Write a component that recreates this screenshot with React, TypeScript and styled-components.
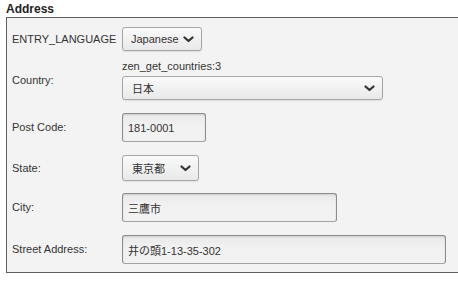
import React from 'react';
import styled, { createGlobalStyle } from 'styled-components';

const GlobalStyle = createGlobalStyle`
  html, body {
    margin: 0;
    padding: 0;
    background: #ffffff;
    overflow: hidden;
  }
  body {
    font-family: "Liberation Sans", Arial, "Noto Sans CJK JP", sans-serif;
    color: #333;
  }
`;

const Wrapper = styled.div`
  padding: 2px 0 0 6px;
  width: 470px;
`;

const Heading = styled.h3`
  margin: 0 0 1px;
  font-size: 12px;
  line-height: 14px;
  font-weight: bold;
  color: #222;
`;

const Panel = styled.div`
  border: 1px solid #5f5f5f;
  background: #f3f3f3;
  padding: 9px 0 8px 5px;
  display: flex;
  flex-direction: column;
`;

const Row = styled.div<{ $gap?: number }>`
  display: flex;
  align-items: center;
  margin-top: ${(p) => (p.$gap ?? 13)}px;
  &:first-child {
    margin-top: 0;
  }
`;

const Label = styled.div`
  width: 110px;
  flex-shrink: 0;
  font-size: 11px;
  line-height: 13px;
  color: #333;
`;

const Field = styled.div`
  display: flex;
  flex-direction: column;
`;

const Note = styled.div`
  font-size: 11px;
  line-height: 13px;
  color: #333;
  margin-bottom: 3px;
`;

const SelectBox = styled.div<{ $w: number; $h?: number; $pad?: number }>`
  box-sizing: border-box;
  width: ${(p) => p.$w}px;
  height: ${(p) => p.$h ?? 24}px;
  display: flex;
  align-items: center;
  justify-content: space-between;
  padding: 0 7px 0 ${(p) => p.$pad ?? 8}px;
  border: 1px solid #a6a6a6;
  border-radius: 3px;
  background: linear-gradient(#fafafa, #e9e9e9);
  box-shadow: 0 1px 1px rgba(0, 0, 0, 0.08);
  font-size: 11px;
  color: #333;
`;

const TextInput = styled.div<{ $w: number }>`
  box-sizing: border-box;
  width: ${(p) => p.$w}px;
  height: 29px;
  display: flex;
  align-items: center;
  padding: 0 5px;
  border: 1px solid #8c8c8c;
  border-bottom-color: #a3a3a3;
  border-radius: 3px;
  background: linear-gradient(#e9e9e9, #f1f1f1 40%, #f2f2f2);
  box-shadow: inset 0 1px 2px rgba(0, 0, 0, 0.12);
  font-size: 11px;
  color: #333;
`;

const Chevron = () => (
  <svg width="11" height="7" viewBox="0 0 11 7">
    <polyline points="1.5,1.5 5.5,5 9.5,1.5" fill="none" stroke="#333" strokeWidth="2.2" strokeLinecap="round" strokeLinejoin="round" />
  </svg>
);

const App: React.FC = () => (
  <Wrapper>
    <GlobalStyle />
    <Heading>Address</Heading>
    <Panel>
      <Row>
        <Label>ENTRY_LANGUAGE</Label>
        <SelectBox $w={80}>
          <span>Japanese</span>
          <Chevron />
        </SelectBox>
      </Row>
      <Row $gap={9}>
        <Label>Country:</Label>
        <Field>
          <Note>zen_get_countries:3</Note>
          <SelectBox $w={261} $pad={9}>
            <span>日本</span>
            <Chevron />
          </SelectBox>
        </Field>
      </Row>
      <Row>
        <Label>Post Code:</Label>
        <TextInput $w={84}>181-0001</TextInput>
      </Row>
      <Row>
        <Label>State:</Label>
        <SelectBox $w={77} $h={26} $pad={9}>
          <span>東京都</span>
          <Chevron />
        </SelectBox>
      </Row>
      <Row $gap={12}>
        <Label>City:</Label>
        <TextInput $w={215}>三鷹市</TextInput>
      </Row>
      <Row>
        <Label>Street Address:</Label>
        <TextInput $w={324}>井の頭1-13-35-302</TextInput>
      </Row>
    </Panel>
  </Wrapper>
);

export default App;
